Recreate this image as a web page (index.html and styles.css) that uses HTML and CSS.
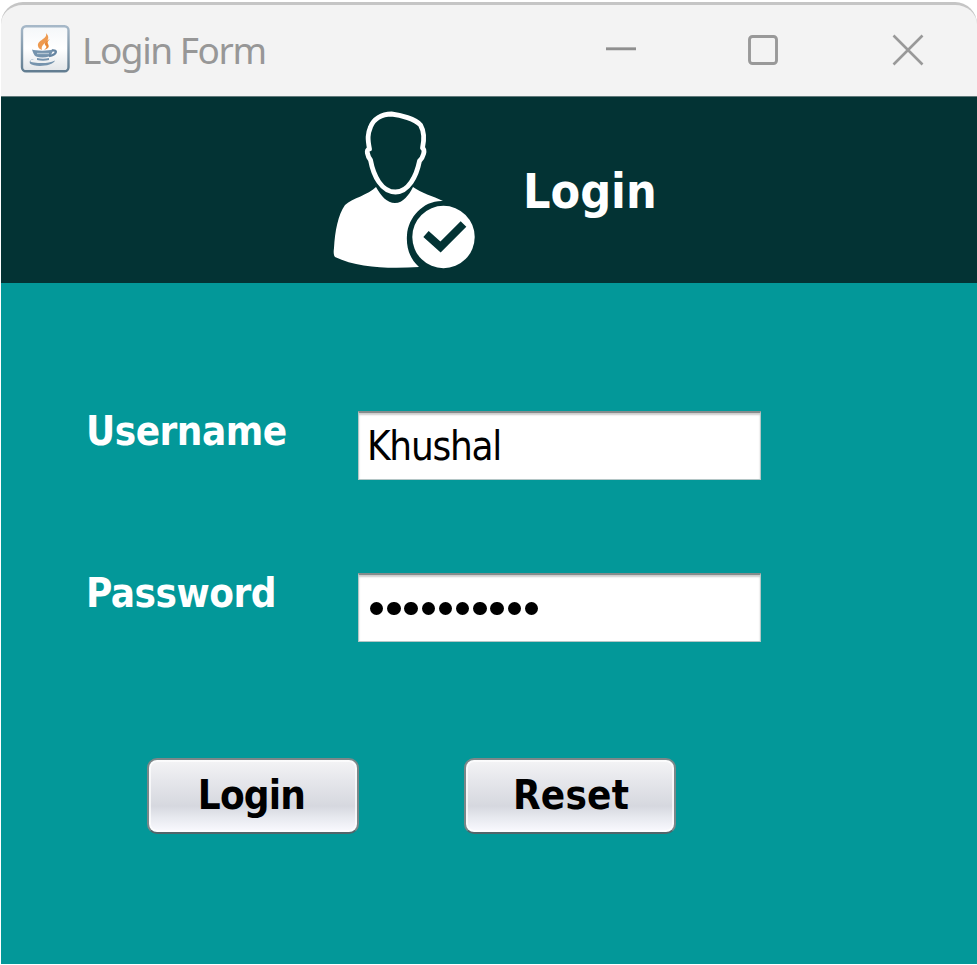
FILE: index.html
```html
<!DOCTYPE html>
<html lang="en">
<head>
<meta charset="utf-8">
<title>Login Form</title>
<link rel="stylesheet" href="styles.css">
</head>
<body>
<main class="window">
  <header class="titlebar">
    <svg class="java" viewBox="0 0 50 48" width="50" height="48">
      <defs>
        <linearGradient id="edge" x2="0" y2="1"><stop stop-color="#a6b8c8"/><stop offset="1" stop-color="#627d91"/></linearGradient>
        <linearGradient id="face" x2="0" y2="1"><stop stop-color="#f4f7f9"/><stop offset=".5" stop-color="#fff"/><stop offset="1" stop-color="#e2e5e8"/></linearGradient>
      </defs>
      <rect x="2" y="1.300" width="46.500" height="45" rx="4" fill="url(#face)" stroke="url(#edge)" stroke-width="2.400"/>
      <path d="M26 8c2 6-9 7-8 13 0 2 2 3 4 4-1-4 1-5 4-8 3-3 3-6 0-9z" fill="#ee9a50"/>
      <path d="M30 14c-6 3-6 5-4 7 1 1 0 2-2 4 6-2 5-4 4-6s0-3 2-5z" fill="#e98936"/>
      <path d="M12 24.500c3 1.500 17 1.500 21 0-1 4-2 6-4 7-4 1.200-9 1.200-13 0-2-1-3-4-4-7z" fill="#7593ad"/>
      <path d="M17 28.500h12" stroke="#b4c5d3" stroke-width="1.300"/>
      <path d="M32 25.500c6-1 5 4-3 5.500" fill="none" stroke="#6685a2" stroke-width="2.400"/>
      <path d="M14 34c-5 1-5 3 0 3.500 7 1 15 1 21-2-2 6-21 7-25 3-1-3 1-4.500 4-4.500z" fill="#7593ad"/>
      <path d="M17 33c4 1 8 1 12 0v2c-4 1-8 1-12 0z" fill="#7593ad"/>
    </svg>
    <span class="caption">Login Form</span>
    <svg class="controls" viewBox="0 0 320 34" width="320" height="34" fill="none" stroke="#999" stroke-width="2.900">
      <path d="M1 15.800h30" stroke="#8f8f8f"/>
      <rect x="144.500" y="3.500" width="27" height="27" rx="3"/>
      <path d="M288.500 2.500l29 29m0-29l-29 29" stroke-width="2.600"/>
    </svg>
  </header>
  <section class="banner">
    <svg class="user" viewBox="0 0 170 186" width="170" height="186">
      <path d="M72 18C62 18 54 23 51 31C48 38 48 43 50 53C46 53 48 60 51 64C54 80 62 96 76 96C89 96 97 80 100 65C104 61 106 54 103 52C105 43 105 36 101 29C96 23 81 19 72 18Z" transform="translate(-.5 -1)" fill="none" stroke="#fff" stroke-width="4.800" stroke-linejoin="round"/>
      <path d="M56 90C61 99 67 106 75 106C83 106 89 98 93 90C101 96 113 99 123 104C104 103 88 120 87 138C86 151 90 162 99 170C70 172 38 171 15 160Q13 158 14 151C15 134 18 118 25 108C33 101 48 98 56 90Z" fill="#fff"/>
      <circle cx="123.500" cy="140" r="31.200" fill="#fff"/>
      <path d="M106 137L120.500 150L143.500 127" fill="none" stroke="#033334" stroke-width="8"/>
    </svg>
    <h1 class="heading">Login</h1>
  </section>
  <form class="form">
    <div class="row">
      <label class="label" for="username">Username</label>
      <input class="field" id="username" type="text" value="Khushal">
    </div>
    <div class="row">
      <label class="label">Password</label>
      <div class="field dots"><i></i><i></i><i></i><i></i><i></i><i></i><i></i><i></i><i></i><i></i></div>
    </div>
    <div class="actions">
      <button class="button" type="button">Login</button>
      <button class="button reset" type="button">Reset</button>
    </div>
  </form>
</main>
</body>
</html>
```
FILE: styles.css
```css
* { box-sizing: border-box; }
html { background: #fff; }
body { margin: 0; overflow: hidden; font-family: "DejaVu Sans Condensed", "Noto Sans", sans-serif; }
.window { display: flex; flex-direction: column; width: 976px; height: 964px; margin-left: 1px; }
.titlebar {
  display: flex; align-items: flex-start; height: 94px; margin-top: 2px; flex: none;
  padding: 20px 52px 0 19px; background: #f3f3f3;
  border-top: 3px solid #c5c5c5; border-radius: 22px 22px 0 0;
}
.java { flex: none; }
.caption {
  margin: 2px 0 0 12px; font: 37px/46px "Noto Sans", sans-serif;
  letter-spacing: -1.450px; color: #979797; white-space: nowrap;
}
.controls { margin: 8px 0 0 auto; flex: none; }
.banner {
  display: flex; flex: none; height: 187px; padding-left: 319px;
  background: #033334; border-top: 1px solid #60797a;
}
.user { flex: none; margin-top: -.5px; }
.heading { margin: 64px 0 0 33px; font-size: 48px; line-height: 60px; letter-spacing: 0; color: #fff; }
.form { flex: 1; padding: 128px 0 0 85px; background: #039899; }
.row { display: flex; height: 162px; }
.label { width: 272px; flex: none; font-size: 40px; font-weight: bold; line-height: 48px; letter-spacing: -.5px; color: #fff; margin-top: -4px; }
.field {
  width: 403px; height: 69px; margin: 0; padding: 0 8px 1px; color: #000; background: #fff;
  font-family: "DejaVu Sans Condensed", "Noto Sans", sans-serif; font-size: 40px; letter-spacing: -1.250px;
  border: 1px solid #b4c6c6; border-top: 2px solid #858c8c; border-radius: 0; outline: none;
  box-shadow: inset 0 2px 2px #ccc;
}
.dots { display: flex; align-items: center; gap: 3.800px; padding-left: 11px; }
.dots i { width: 13.400px; height: 13.400px; border-radius: 50%; background: #000; margin-top: 2px; }
.actions { display: flex; gap: 105px; margin: 23px 0 0 61px; }
.button {
  width: 212px; height: 76px; padding: 0 3px 3px 0; border: 2px solid #7b8789; border-bottom-color: #52666a;
  border-radius: 10px; box-shadow: inset 0 0 0 2px #ffffffb0; color: #000;
  background: linear-gradient(#f4f4f6 0%, #e5e6eb 30%, #d6d8df 64%, #e7e9ef 80%, #fafaff 100%);
  font-family: "DejaVu Sans Condensed", "Noto Sans", sans-serif; font-size: 40px; font-weight: bold; letter-spacing: -.8px;
}
.reset { letter-spacing: .2px; padding: 0 0 3px 2px; }
```
